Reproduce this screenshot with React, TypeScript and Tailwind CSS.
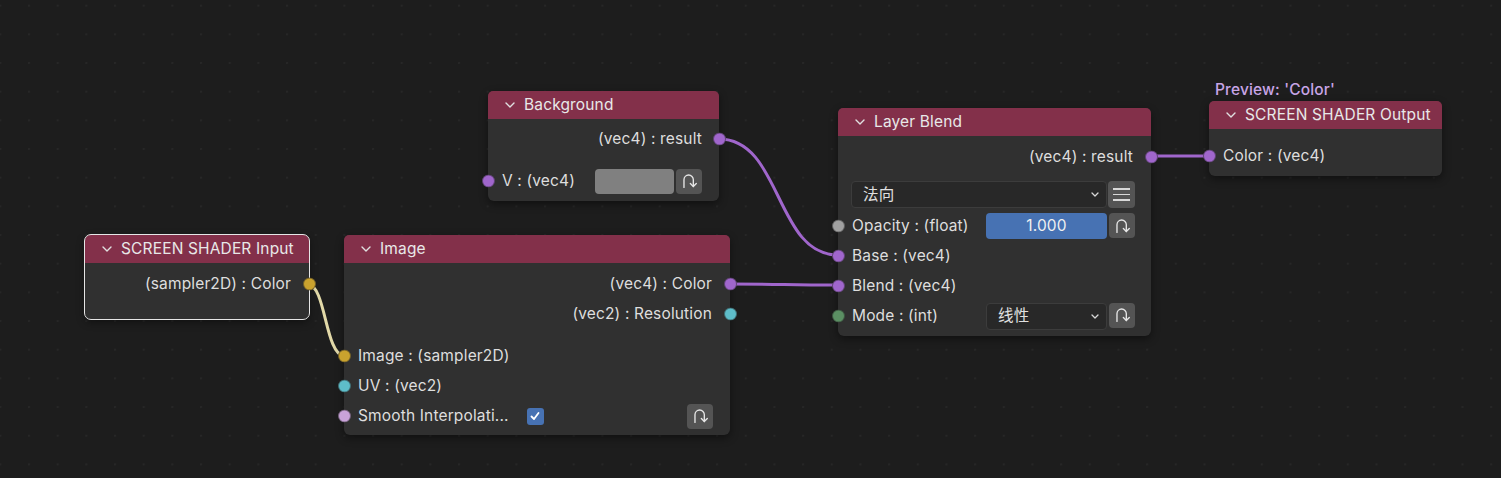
import React from 'react';

const FONT = "font-['Inter','Noto_Sans_CJK_SC',sans-serif]";

const Socket = ({ color, side }: { color: string; side: 'left' | 'right' }) => (
  <span
    className={`absolute top-1/2 -translate-y-1/2 w-[13px] h-[13px] rounded-full border border-[#222222]/50 ${color} ${
      side === 'left' ? '-left-[6.5px]' : '-right-[6.5px]'
    }`}
  />
);

const ResetIcon = () => (
  <svg viewBox="0 0 20 20" className="w-[17px] h-[18px]" fill="none" stroke="#e6e6e6" strokeWidth="1.6" strokeLinecap="round" strokeLinejoin="round">
    <path d="M3.5 17.5V8.5a5.5 5.5 0 0 1 11 0v8" />
    <path d="M11 13l3.5 3.5L18 13" />
  </svg>
);

const ResetButton = () => (
  <div className="w-[26px] h-[25px] rounded-[4px] bg-[#545454] flex items-center justify-center shrink-0">
    <ResetIcon />
  </div>
);

const Chevron = () => (
  <svg viewBox="0 0 10 6" className="w-[10px] h-[6px]" fill="none" stroke="#e0e0e0" strokeWidth="1.4" strokeLinecap="round" strokeLinejoin="round">
    <path d="M1 1l4 4 4-4" />
  </svg>
);

const SmallChevron = () => (
  <svg viewBox="0 0 8 5" className="w-[8px] h-[5px]" fill="none" stroke="#d8d8d8" strokeWidth="1.3" strokeLinecap="round" strokeLinejoin="round">
    <path d="M1 1l3 3 3-3" />
  </svg>
);

const Header = ({ title }: { title: string }) => (
  <div className="h-[28px] bg-[#83304a] rounded-t-[5px] flex items-center pl-[17px] gap-[9px] text-[#e8e8e8]">
    <Chevron />
    <span>{title}</span>
  </div>
);

interface NodeProps {
  title: string;
  className: string;
  selected?: boolean;
  children: React.ReactNode;
}

const Node = ({ title, className, selected, children }: NodeProps) => (
  <div
    className={`absolute rounded-[6px] bg-[#303030] shadow-[0_3px_8px_rgba(0,0,0,0.45)] ${
      selected ? 'outline outline-1 outline-[#e6e6e6]' : ''
    } ${className}`}
  >
    <Header title={title} />
    {children}
  </div>
);

const Row = ({
  children,
  className = '',
}: {
  children: React.ReactNode;
  className?: string;
}) => <div className={`relative h-[30px] flex items-center ${className}`}>{children}</div>;

const Dropdown = ({ label, className }: { label: string; className: string }) => (
  <div className={`h-[27px] rounded-[4px] bg-[#282828] border border-[#3c3c3c] flex items-center justify-between pl-[11px] pr-[7px] ${className}`}>
    <span className="text-[#e0e0e0]">{label}</span>
    <SmallChevron />
  </div>
);

const Wires = () => (
  <svg className="absolute inset-0 w-full h-full" width="1501" height="478">
    <defs>
      <pattern id="dots" x="28" y="4.7" width="28.67" height="28.67" patternUnits="userSpaceOnUse">
        <circle cx="0.8" cy="0.8" r="1.3" fill="#272727" />
      </pattern>
    </defs>
    <rect width="1501" height="478" fill="url(#dots)" />
    <g fill="none" strokeWidth="3" strokeLinecap="round">
      <path d="M719 139 C 782 139, 775 255, 838 255" stroke="#a066cc" />
      <path d="M730 284 C 784 284, 784 285, 838 285" stroke="#a066cc" />
      <path d="M1151 156 L 1209 156" stroke="#a066cc" />
      <path d="M308 284 C 326 286, 325 354, 344 356" stroke="#e2d9a8" />
    </g>
  </svg>
);

const App = () => {
  return (
    <div className={`relative w-[1501px] h-[478px] overflow-hidden bg-[#1d1d1d] text-[15.5px] tracking-[0.15px] text-[#dedede] ${FONT}`}>
      <Wires />

      {/* Background */}
      <Node title="Background" className="left-[488px] top-[91px] w-[231px]">
        <div className="pt-[5px] pb-[5px]">
          <Row className="justify-end pr-[17px]">
            <span>(vec4) : result</span>
            <Socket color="bg-[#a066cc]" side="right" />
          </Row>
          <Row className="mt-[12px] pl-[14px] pr-[17px]">
            <Socket color="bg-[#a066cc]" side="left" />
            <span>V : (vec4)</span>
            <div className="ml-auto flex gap-[2px]">
              <div className="w-[79px] h-[25px] rounded-[4px] bg-[#808080]" />
              <ResetButton />
            </div>
          </Row>
        </div>
      </Node>

      {/* SCREEN SHADER Input */}
      <Node title="SCREEN SHADER Input" selected className="left-[85px] top-[235px] w-[224px]">
        <div className="pt-[6px] pb-[20px]">
          <Row className="justify-end pr-[18px]">
            <span>(sampler2D) : Color</span>
            <Socket color="bg-[#c9a22e]" side="right" />
          </Row>
        </div>
      </Node>

      {/* Image */}
      <Node title="Image" className="left-[344px] top-[235px] w-[386px]">
        <div className="pt-[6px] pb-[4px]">
          <Row className="justify-end pr-[18px]">
            <span>(vec4) : Color</span>
            <Socket color="bg-[#a066cc]" side="right" />
          </Row>
          <Row className="justify-end pr-[18px]">
            <span>(vec2) : Resolution</span>
            <Socket color="bg-[#5ebdc9]" side="right" />
          </Row>
          <Row className="mt-[12px] pl-[14px]">
            <Socket color="bg-[#c9a22e]" side="left" />
            <span>Image : (sampler2D)</span>
          </Row>
          <Row className="pl-[14px]">
            <Socket color="bg-[#5ebdc9]" side="left" />
            <span>UV : (vec2)</span>
          </Row>
          <Row className="pl-[14px] pr-[17px]">
            <Socket color="bg-[#c9a3d9]" side="left" />
            <span>Smooth Interpolati...</span>
            <div className="ml-[18px] w-[17px] h-[17px] rounded-[3px] bg-[#4772b3] flex items-center justify-center">
              <svg viewBox="0 0 12 12" className="w-[12px] h-[12px]" fill="none" stroke="#ffffff" strokeWidth="1.8" strokeLinecap="round" strokeLinejoin="round">
                <path d="M2.5 6.5l2.5 2.5 4.5-6" />
              </svg>
            </div>
            <div className="ml-auto">
              <ResetButton />
            </div>
          </Row>
        </div>
      </Node>

      {/* Layer Blend */}
      <Node title="Layer Blend" className="left-[838px] top-[108px] w-[313px]">
        <div className="pt-[6px] pb-[5px]">
          <Row className="justify-end pr-[18px]">
            <span>(vec4) : result</span>
            <Socket color="bg-[#a066cc]" side="right" />
          </Row>
          <div className="mt-[9px] px-[13px] pr-[16px] flex gap-[1px]">
            <Dropdown label="法向" className="flex-1" />
            <div className="w-[27px] h-[27px] rounded-[4px] bg-[#545454] flex flex-col items-center justify-center gap-[4px]">
              <span className="w-[17px] h-[1.5px] bg-[#d8d8d8]" />
              <span className="w-[17px] h-[1.5px] bg-[#d8d8d8]" />
              <span className="w-[17px] h-[1.5px] bg-[#d8d8d8]" />
            </div>
          </div>
          <Row className="mt-[3px] pl-[14px] pr-[16px]">
            <Socket color="bg-[#a1a1a1]" side="left" />
            <span>Opacity : (float)</span>
            <div className="ml-auto flex gap-[2px]">
              <div className="w-[121px] h-[26px] rounded-[4px] bg-[#4772b3] flex items-center justify-center text-[#f0f0f0]">
                1.000
              </div>
              <ResetButton />
            </div>
          </Row>
          <Row className="pl-[14px]">
            <Socket color="bg-[#a066cc]" side="left" />
            <span>Base : (vec4)</span>
          </Row>
          <Row className="pl-[14px]">
            <Socket color="bg-[#a066cc]" side="left" />
            <span>Blend : (vec4)</span>
          </Row>
          <Row className="pl-[14px] pr-[16px]">
            <Socket color="bg-[#5b8f63]" side="left" />
            <span>Mode : (int)</span>
            <div className="ml-auto flex gap-[2px]">
              <Dropdown label="线性" className="w-[121px]" />
              <ResetButton />
            </div>
          </Row>
        </div>
      </Node>

      {/* SCREEN SHADER Output */}
      <div className="absolute left-[1209px] top-[78px] w-[233px]">
        <div className="h-[23px] pl-[6px] flex items-center font-medium text-[#c8a5e6]">
          Preview: 'Color'
        </div>
        <div className="rounded-[6px] bg-[#303030] shadow-[0_3px_8px_rgba(0,0,0,0.45)]">
          <Header title="SCREEN SHADER Output" />
          <div className="pt-[12px] pb-[5px]">
            <Row className="pl-[14px]">
              <Socket color="bg-[#a066cc]" side="left" />
              <span>Color : (vec4)</span>
            </Row>
          </div>
        </div>
      </div>
    </div>
  );
};

export default App;
